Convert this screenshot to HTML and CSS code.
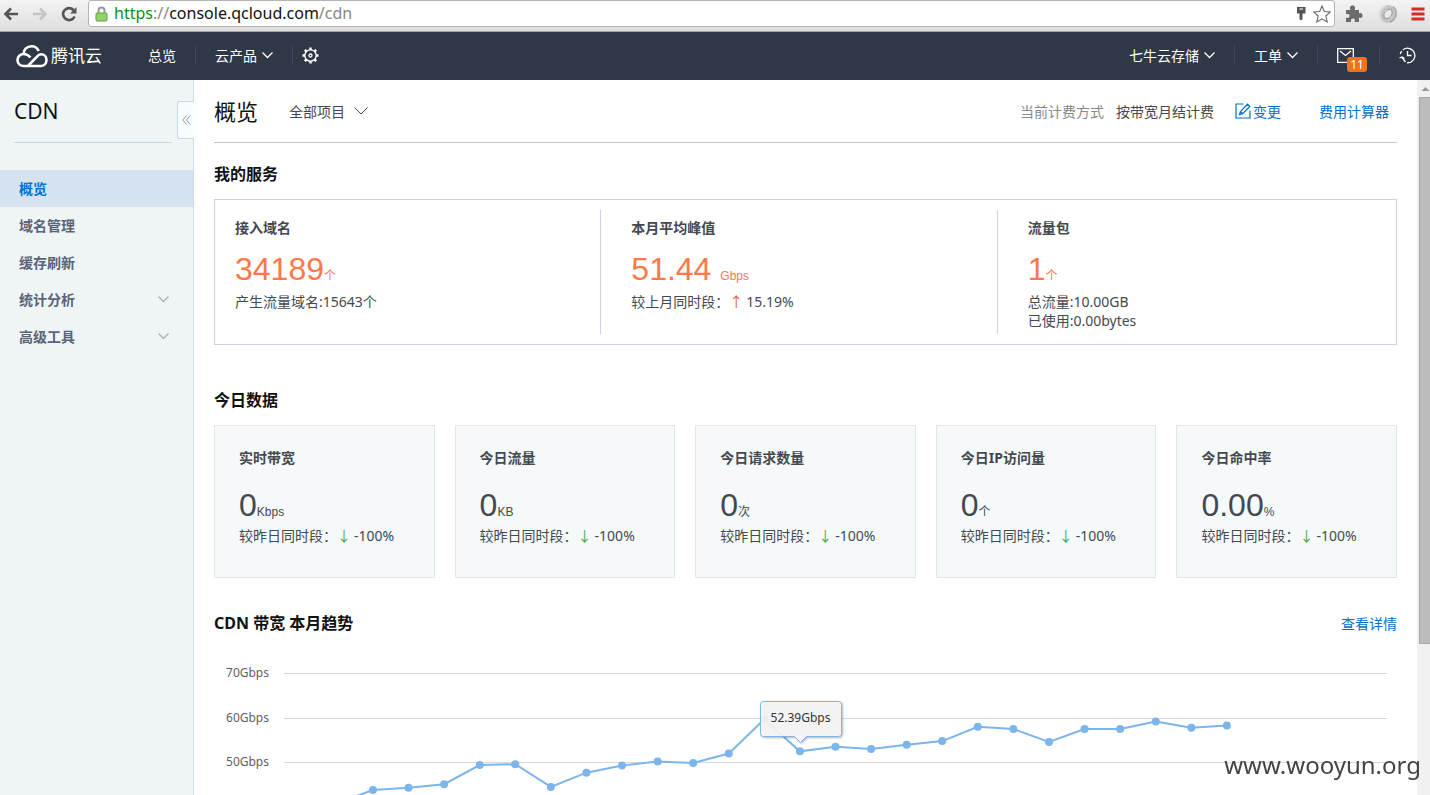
FILE: index.html
```html
<!DOCTYPE html>
<html lang="zh-CN">
<head>
  <meta charset="UTF-8" />
  <meta name="viewport" content="width=device-width, initial-scale=1.0"/>
  <title>CDN - 概览</title>
  <link rel="stylesheet" href="styles.css">
</head>
<body>
  <!-- Browser toolbar -->
  <div class="browser-bar">
    <button class="tool-btn" aria-label="Back">
      <svg width="16" height="14" viewBox="0 0 16 14" fill="none" stroke="#555" stroke-width="2.6"><path d="M15 7H2.5M8 1.5L2.5 7L8 12.5"/></svg>
    </button>
    <button class="tool-btn" aria-label="Forward">
      <svg width="16" height="14" viewBox="0 0 16 14" fill="none" stroke="#c4c4c4" stroke-width="2.6"><path d="M1 7H13.5M8 1.5L13.5 7L8 12.5"/></svg>
    </button>
    <button class="tool-btn" aria-label="Reload">
      <svg width="16" height="16" viewBox="0 0 16 16"><path d="M13.6 10.5A6 6 0 1 1 12.5 4" fill="none" stroke="#555" stroke-width="2.6"/><path d="M15.5 1V7.5H9Z" fill="#555"/></svg>
    </button>
    <div class="address">
      <svg width="13" height="16" viewBox="0 0 13 16"><path d="M3.5 8V4.500A3 3 0 0 1 9.5 4.500V8" fill="none" stroke="#999" stroke-width="2"/><rect x="1" y="7" width="11" height="8" rx="1" fill="#8fd16a" stroke="#59a53b"/></svg>
      <span class="url"><span class="secure">https</span><span class="dim">://</span>console.qcloud.com<span class="dim">/cdn</span></span>
      <svg width="12" height="16" viewBox="0 0 12 16"><path d="M2 1H10.500V7.500H7.500V13L6 14.500L4.500 13V7.500H2Z" fill="#555"/><path d="M4.500 3H8" stroke="#ddd" stroke-width="1.4"/></svg>
      <svg width="18" height="18" viewBox="0 0 18 18"><path d="M9 1L11.300 6.500L17.300 7L12.800 11L14.200 17L9 13.800L3.800 17L5.200 11L0.700 7L6.700 6.500Z" fill="#fff" stroke="#666" stroke-width="1.1"/></svg>
    </div>
    <button class="tool-btn" aria-label="Extensions">
      <svg width="18" height="18" viewBox="0 0 18 18"><path d="M1 5H5.500C4 2 5.500 0.500 7.500 0.500S11 2 9.500 5H14V8.500C16 7.500 17.500 8.500 17.500 10.500S16 13.500 14 12.500V17H9.500C10.500 14.500 9.500 13.500 8 13.500S5.500 14.500 6 17H1V12.500C3.500 13.500 4.500 12.500 4.500 11S3.500 8.500 1 9.500Z" fill="#6b6b6b"/></svg>
    </button>
    <button class="tool-btn" aria-label="Extension">
      <svg width="20" height="20" viewBox="0 0 20 20" fill="none"><circle cx="10" cy="10" r="6.500" stroke="#c4c4c4" stroke-width="5"/><path d="M4 17C0 12 1 5 8 1.500" stroke="#dedede" stroke-width="2"/><path d="M15 2.500C20 7 19 15 12 18" stroke="#a8a8a8" stroke-width="1.5"/><path d="M13 5C16 9 13 14 8 15M7 15C4 11 7 6 12 5" stroke="#959595"/></svg>
    </button>
    <button class="tool-btn" aria-label="Menu">
      <svg width="14" height="14" viewBox="0 0 14 14" stroke="#d62a2a" stroke-width="3"><path d="M0.500 2H13.500M0.500 7H13.500M0.500 12H13.500"/></svg>
    </button>
  </div>

  <!-- Top navigation -->
  <header class="topnav">
    <a class="logo" href="#">
      <svg width="32" height="24" viewBox="0 0 32 24" fill="none" stroke="#fff" stroke-width="2.6" stroke-linejoin="round"><path d="M7.500 10C7.500 5.500 11 2.200 15.500 2.200C19 2.200 21.500 4 22.700 7M12.300 21.500L20.500 13.200C22 11.500 23.300 10.300 25 10.300C28.200 10.300 30.500 12.800 30.500 16C30.500 19.500 28 22 24.500 22H8C4.200 22 1.500 19.500 1.500 16C1.500 12.500 4.300 10 7.800 10C10.500 10 12.500 11.300 14.500 13.500"/></svg>
      <span>腾讯云</span>
    </a>
    <nav class="nav-list">
      <a class="nav-item" href="#">总览</a>
      <button class="nav-item">云产品 <svg width="11" height="7" viewBox="0 0 11 7"><path d="M0.500 0.500L5.500 5.500L10.500 0.500"/></svg></button>
      <button class="nav-item nav-gear" aria-label="设置">
        <svg width="17" height="17" viewBox="0 0 17 17"><circle cx="8.500" cy="8.500" r="5.700"/><circle cx="8.500" cy="8.500" r="1.500"/><path class="teeth" d="M8.500 3V0.500M8.500 14V16.500M3 8.500H0.500M14 8.500H16.500M4.600 4.600L2.800 2.800M12.400 4.600L14.200 2.800M4.600 12.400L2.800 14.200M12.400 12.400L14.200 14.200"/></svg>
      </button>
    </nav>
    <nav class="nav-list nav-right">
      <button class="nav-item">七牛云存储 <svg width="11" height="7" viewBox="0 0 11 7"><path d="M0.500 0.500L5.500 5.500L10.500 0.500"/></svg></button>
      <button class="nav-item">工单 <svg width="11" height="7" viewBox="0 0 11 7"><path d="M0.500 0.500L5.500 5.500L10.500 0.500"/></svg></button>
      <button class="nav-item nav-mail" aria-label="消息">
        <svg width="17" height="15" viewBox="0 0 17 15"><path d="M0.700 0.700H16.300V14.300H0.700ZM3 3L8.500 7.500L14 3"/></svg>
        <span class="badge">11</span>
      </button>
      <button class="nav-item nav-clock" aria-label="历史">
        <svg width="17" height="17" viewBox="0 0 17 17"><path d="M8 15.800A7.300 7.300 0 1 0 4 2.800M2.800 4A7.300 7.300 0 0 0 1.300 7"/><path d="M8.500 4V8.500H12.500M0.500 11L3 10L5.500 11.500M3 10.500L6.500 15"/></svg>
      </button>
    </nav>
  </header>

  <div class="layout">
    <aside class="sidebar">
      <h1 class="side-title">CDN</h1>
      <button class="collapse" aria-label="收起">
        <svg width="9" height="10" viewBox="0 0 9 10" fill="none" stroke="#8598a8"><path d="M4.500 0.500L0.700 5L4.500 9.500M8.300 0.500L4.500 5L8.300 9.500"/></svg>
      </button>
      <nav class="side-menu">
        <a class="active" href="#">概览</a>
        <a href="#">域名管理</a>
        <a href="#">缓存刷新</a>
        <a href="#">统计分析 <svg width="11" height="7" viewBox="0 0 11 7"><path d="M0.500 0.500L5.500 5.500L10.500 0.500"/></svg></a>
        <a href="#">高级工具 <svg width="11" height="7" viewBox="0 0 11 7"><path d="M0.500 0.500L5.500 5.500L10.500 0.500"/></svg></a>
      </nav>
    </aside>

    <main class="content">
      <div class="page-head">
        <h2>概览</h2>
        <label class="project">
          <select aria-label="项目">
            <option>全部项目</option>
          </select>
          <svg width="14" height="8" viewBox="0 0 14 8"><path d="M0.500 0.500L7 7L13.500 0.500"/></svg>
        </label>
        <div class="billing">
          <span class="billing-label">当前计费方式</span>
          <span class="billing-mode">按带宽月结计费</span>
          <a class="change" href="#"><svg width="16" height="16" viewBox="0 0 16 16" fill="none" stroke="#0071ce" stroke-width="1.2"><path d="M8.500 1H1V15H15V7.500"/><path d="M4.500 11.500L5.500 8.500L12.500 1.200L14.800 3.400L7.600 10.600ZM5.500 8.500L7.600 10.600"/></svg>变更</a>
          <a class="calculator" href="#">费用计算器</a>
        </div>
      </div>

      <h3 class="service-title">我的服务</h3>
      <section class="services">
        <div class="service-list">
          <div class="service">
            <h4>接入域名</h4>
            <p class="number">34189<small>个</small></p>
            <p>产生流量域名:15643个</p>
          </div>
          <div class="service">
            <h4>本月平均峰值</h4>
            <p class="number">51.44 <small>Gbps</small></p>
            <p>较上月同时段：<i class="up">↑</i>15.19%</p>
          </div>
          <div class="service">
            <h4>流量包</h4>
            <p class="number">1<small>个</small></p>
            <p>总流量:10.00GB</p>
            <p>已使用:0.00bytes</p>
          </div>
        </div>
      </section>

      <h3 class="today-title">今日数据</h3>
      <section class="cards">
        <div class="card">
          <h4>实时带宽</h4>
          <p class="number">0<small>Kbps</small></p>
          <p>较昨日同时段：<i class="down">↓</i>-100%</p>
        </div>
        <div class="card">
          <h4>今日流量</h4>
          <p class="number">0<small>KB</small></p>
          <p>较昨日同时段：<i class="down">↓</i>-100%</p>
        </div>
        <div class="card">
          <h4>今日请求数量</h4>
          <p class="number">0<small>次</small></p>
          <p>较昨日同时段：<i class="down">↓</i>-100%</p>
        </div>
        <div class="card">
          <h4>今日IP访问量</h4>
          <p class="number">0<small>个</small></p>
          <p>较昨日同时段：<i class="down">↓</i>-100%</p>
        </div>
        <div class="card">
          <h4>今日命中率</h4>
          <p class="number">0.00<small>%</small></p>
          <p>较昨日同时段：<i class="down">↓</i>-100%</p>
        </div>
      </section>

      <div class="trend-head">
        <h3>CDN 带宽 本月趋势</h3>
        <a href="#">查看详情</a>
      </div>
      <svg id="chart" class="chart" viewBox="0 0 1183 146"></svg>
    </main>

    <div class="scrollbar">
      <svg width="13" height="17" viewBox="0 0 13 17"><path d="M4.500 11L8.500 7L12.500 11Z" fill="#999"/></svg>
      <div class="thumb"></div>
    </div>
  </div>

  <div class="watermark">www.wooyun.org</div>

  <script>
    // Daily peak bandwidth in Gbps, from the 2nd of the month
    const values = [40.8, 43.7, 44.2, 45.0, 49.3, 49.5, 44.4, 47.6, 49.2, 50.1, 49.8, 51.9, 59.6,
      52.39, 53.4, 52.9, 53.9, 54.7, 57.9, 57.4, 54.5, 57.4, 57.4, 59.1, 57.7, 58.2];
    const days = 31;
    const firstDay = 2;
    const hovered = 13;
    const left = 70, right = 1173, top70 = 24, perGbps = 4.45;

    const yOf = v => top70 + (70 - v) * perGbps;
    const xOf = i => left + (i + firstDay - 0.5) * (right - left) / days;

    let svg = "";
    for (let g = 70; g >= 50; g -= 10) {
      const y = Math.round(yOf(g)) + 0.5;
      svg += `<text class="axis" x="55" y="${y + 3}" text-anchor="end">${g}Gbps</text>`;
      svg += `<path class="grid" d="M${left} ${y}H${right}"/>`;
    }
    svg += `<polyline class="line" points="${values.map((v, i) => xOf(i) + "," + yOf(v)).join(" ")}"/>`;
    values.forEach((v, i) => {
      svg += `<circle class="dot" cx="${xOf(i)}" cy="${yOf(v)}" r="4"/>`;
    });

    // Tooltip above the hovered point
    const tx = Math.round(xOf(hovered)) + 0.5, ty = Math.round(yOf(values[hovered])) - 8.5;
    svg += `<path class="tip" d="M${tx} ${ty}l-6 -6h-31q-3 0 -3 -3v-29q0 -3 3 -3h75q3 0 3 3v29q0 3 -3 3h-32z"/>`;
    svg += `<text class="tip-text" x="${tx}" y="${ty - 21}" text-anchor="middle">${values[hovered]}Gbps</text>`;
    document.getElementById("chart").innerHTML = svg;
  </script>
</body>
</html>
```

FILE: styles.css
```css
* {
  box-sizing: border-box;
}

body {
  margin: 0;
  height: 100vh;
  display: flex;
  flex-direction: column;
  overflow: hidden;
  font-family: "Noto Sans", "Noto Sans CJK SC", sans-serif;
  font-size: 14px;
  line-height: 19px;
  color: #444950;
  background: #fff;
}

h1, h2, h3, h4, p {
  margin: 0;
}

a {
  color: #0071ce;
  text-decoration: none;
}

button {
  padding: 0;
  border: none;
  background: none;
  font: inherit;
  cursor: pointer;
}

/* Browser toolbar */
.browser-bar {
  flex: none;
  display: flex;
  align-items: center;
  gap: 13px;
  height: 32px;
  padding: 0 5px 4px 3px;
  background: linear-gradient(#f3f3f3, #dedede);
  border-bottom: 1px solid #a3a3a3;
}

.tool-btn {
  display: flex;
}

.address {
  flex: 1;
  display: flex;
  align-items: center;
  gap: 6px;
  height: 27px;
  margin: 0 -3px 0 -2px;
  padding: 0 3px 0 6px;
  background: #fff;
  border: 1px solid #b5b5b5;
  border-radius: 3px;
}

.address + .tool-btn {
  margin-right: 2px;
}

.url {
  flex: 1;
  font-size: 16px;
  color: #111;
}

.secure {
  color: #0a930a;
}

.dim {
  color: #888;
}

/* Top navigation */
.topnav {
  flex: none;
  display: flex;
  align-items: center;
  height: 48px;
  padding-bottom: 1px;
  background: #2f3846;
}

.logo {
  display: flex;
  align-items: center;
  gap: 3px;
  width: 129px;
  padding-left: 16px;
  font-size: 17px;
  color: #fff;
}

.nav-list {
  display: flex;
}

.nav-right {
  margin-left: auto;
}

.nav-item {
  display: flex;
  align-items: center;
  gap: 5px;
  padding: 0 19px;
  border-right: 1px solid #3d4858;
  color: #fff;
}

.nav-item svg {
  fill: none;
  stroke: #fff;
  stroke-width: 1.3;
}

.nav-item .teeth {
  stroke-width: 2.4;
}

.nav-gear {
  padding: 0 9px;
  border: none;
}

.nav-mail {
  position: relative;
  padding-right: 25px;
}

.badge {
  position: absolute;
  left: 29px;
  top: 11px;
  width: 20px;
  border-radius: 3px;
  background: #ee7220;
  font-size: 12px;
  line-height: 15px;
}

.nav-clock {
  padding-right: 14px;
  border: none;
}

.layout {
  flex: 1;
  display: flex;
  min-height: 0;
}

/* Sidebar */
.sidebar {
  position: relative;
  flex: none;
  width: 194px;
  background: #eff5f5;
  border-right: 1px solid #cddde6;
}

.side-title {
  height: 63px;
  margin: 0 21px 27px 14px;
  border-bottom: 1px solid #c3d9e6;
  font-size: 21px;
  font-weight: 400;
  line-height: 62px;
  color: #111;
}

.collapse {
  position: absolute;
  right: -1px;
  top: 21px;
  width: 17px;
  height: 38px;
  display: flex;
  align-items: center;
  justify-content: center;
  background: #f7fcfc;
  border: 1px solid #bfdcec;
  border-right: none;
  border-radius: 3px 0 0 3px;
}

.side-menu a {
  display: flex;
  align-items: center;
  justify-content: space-between;
  height: 37px;
  padding: 0 24px 0 19px;
  font-weight: 700;
  color: #5a6478;
}

.side-menu .active {
  background: #d5e2ef;
  color: #0071ce;
}

.side-menu svg {
  fill: none;
  stroke: #a9b2bc;
  stroke-width: 1.3;
}

/* Main content */
.content {
  flex: 1;
  min-width: 0;
  padding: 0 20px;
  overflow: hidden;
}

.page-head {
  display: flex;
  align-items: center;
  height: 63px;
  border-bottom: 1px solid #c8c8c8;
}

.page-head h2 {
  font-size: 22px;
  font-weight: 400;
  color: #111;
}

.project {
  display: flex;
  align-items: center;
  gap: 9px;
  margin-left: 31px;
}

.project select {
  appearance: none;
  padding: 0;
  border: none;
  background: none;
  font: inherit;
  color: inherit;
}

.project svg {
  fill: none;
  stroke: #444950;
}

.billing {
  display: flex;
  align-items: center;
  gap: 12px;
  margin-left: auto;
  padding-right: 8px;
}

.billing-label {
  color: #888;
}

.change {
  display: flex;
  align-items: center;
  gap: 2px;
  margin: 0 26px 0 9px;
}

h3 {
  font-size: 16px;
  line-height: 24px;
  color: #111;
}

.service-title {
  margin: 19px 0 13px;
}

.services {
  padding: 10px 3px 10px 0;
  border: 1px solid #d0d2de;
}

.service-list {
  display: grid;
  grid-template-columns: repeat(3, 1fr);
  margin-left: -11px;
}

.service {
  height: 124px;
  padding: 8px 0 0 30px;
  border-left: 1px solid #d0d2de;
}

.service:first-child {
  border-color: transparent;
}

h4 {
  font-size: 14px;
  line-height: 20px;
}

.number {
  font-family: "Liberation Sans", "Noto Sans CJK SC", sans-serif;
  font-size: 32px;
  line-height: 36px;
}

.number small {
  font-size: 12px;
  line-height: 12px;
}

.service .number {
  margin: 13px 0 5px;
  color: #ff7849;
}

.up, .down {
  margin-right: 3px;
  font-family: "Noto Sans CJK SC", sans-serif;
  font-style: normal;
  line-height: 14px;
  color: #e8603c;
}

.down {
  color: #4caa3c;
}

.today-title {
  margin: 43px 0 13px;
}

.cards {
  display: grid;
  grid-template-columns: repeat(5, 1fr);
  gap: 20px;
}

.card {
  height: 153px;
  padding: 22px 0 0 24px;
  background: #f5f9fa;
  border: 1px solid #e2e7e9;
}

.card .number {
  margin: 19px 0 3px;
}

.trend-head {
  display: flex;
  align-items: center;
  justify-content: space-between;
  margin: 33px 0 14px;
}

/* Chart */
.chart {
  display: block;
  width: 100%;
}

.axis {
  font-size: 12px;
  fill: #606060;
}

.grid {
  stroke: #d8d8d8;
}

.line {
  fill: none;
  stroke: #7cb5ec;
  stroke-width: 2;
}

.dot {
  fill: #7cb5ec;
}

.tip {
  fill: rgba(250, 250, 250, 0.9);
  stroke: #7cb5ec;
  filter: drop-shadow(1px 1px 1px rgba(0, 0, 0, 0.3));
}

.tip-text {
  font-size: 12px;
  fill: #333;
}

.scrollbar {
  flex: none;
  width: 13px;
  background: #f1f1f1;
}

.scrollbar svg {
  display: block;
}

.thumb {
  height: 76.5%;
  margin-left: 2px;
  background: #bcbcbc;
  border: 1px solid #a8a8a8;
  border-right: none;
}

.watermark {
  position: fixed;
  right: 9px;
  bottom: 13px;
  font-size: 24px;
  line-height: 34px;
  color: #444;
}
```
